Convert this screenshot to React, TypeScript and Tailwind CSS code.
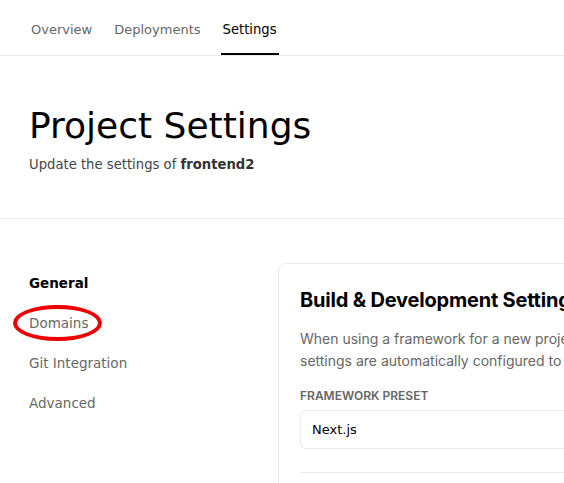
import React from "react";

const tabs = ["Overview", "Deployments", "Settings"];
const sections = ["General", "Domains", "Git Integration", "Advanced"];

export default function App() {
  return (
    <div className="h-[483px] w-full overflow-hidden bg-white font-['DejaVu_Sans',sans-serif] text-[#111]">
      <nav className="flex h-[56px] gap-[18px] border-b border-[#eaeaea] px-[29px]">
        {tabs.map((t) => {
          const active = t === "Settings";
          return (
            <a
              key={t}
              className={
                active
                  ? "flex items-center border-b-2 border-black px-[2px] pt-[6px] text-[13.2px] text-black"
                  : "flex items-center border-b-2 border-transparent px-[2px] pt-[6px] text-[13px] text-[#666]"
              }
            >
              {t}
            </a>
          );
        })}
      </nav>

      <header className="border-b border-[#eaeaea] px-[29px] pt-[48px] pb-[43px]">
        <h1 className="text-[36px] leading-[44px] text-black">Project Settings</h1>
        <p className="mt-[7px] text-[13.2px] leading-[20px] text-[#444]">
          Update the settings of <span className="font-bold text-[#333]">frontend2</span>
        </p>
      </header>

      <div className="flex pt-[44px]">
        <aside className="w-[278px] shrink-0 pl-[29px]">
          {sections.map((s) => (
            <div key={s} className="relative flex h-[40px] items-center text-[13.5px]">
              {s === "General" ? (
                <span className="font-bold text-black">{s}</span>
              ) : (
                <span className="text-[#666]">{s}</span>
              )}
              {s === "Domains" && (
                <span className="pointer-events-none absolute left-[-16px] top-[2px] h-[36px] w-[89px] rounded-[50%] border-[4px] border-[#ee0000]" />
              )}
            </div>
          ))}
        </aside>

        <section className="w-[760px] shrink-0 rounded-lg border border-[#eaeaea] px-[21px] pt-[22px] pb-[24px] font-['Inter',sans-serif]">
          <h2 className="text-[20px] font-bold leading-[28px] tracking-[-0.01em] text-black">
            Build &amp; Development Settings
          </h2>
          <p className="mt-[14px] whitespace-nowrap text-[14px] leading-[22px] text-[#666]">
            When using a framework for a new project, it will be automatically detected. As a result, several project
            <br />
            settings are automatically configured to achieve the best result.
          </p>
          <label className="mt-[16px] block text-[12px] font-semibold leading-[16px] text-[#666]">
            FRAMEWORK PRESET
          </label>
          <div className="mt-[6px] flex h-[39px] items-center rounded-md border border-[#eaeaea] px-[11px] font-['DejaVu_Sans',sans-serif] text-[13px] text-black">
            Next.js
          </div>
          <div className="mt-[23px] border-t border-[#eaeaea]" />
          <div className="mt-[22px] text-[12px] font-semibold leading-[16px] text-[#666]">BUILD COMMAND</div>
          <div className="mt-[6px] flex h-[39px] items-center rounded-md border border-[#eaeaea] px-[11px] text-[13px] text-[#999]">
            npm run build
          </div>
        </section>
      </div>
    </div>
  );
}
